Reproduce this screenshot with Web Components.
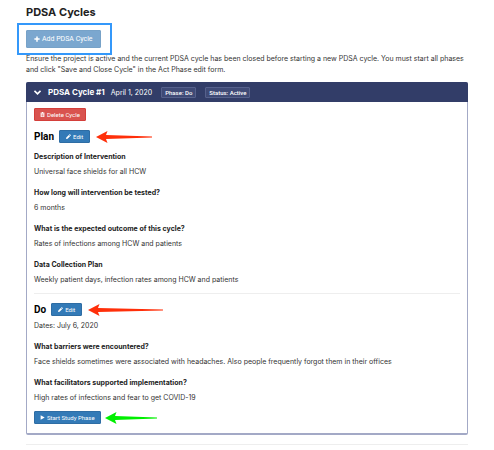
<!DOCTYPE html>
<html lang="en">
<head>
<meta charset="utf-8">
<meta name="viewport" content="width=device-width, initial-scale=1">
<title>PDSA Cycles</title>
<style>
body {
    margin: 0;
    background: #fff;
    color: #333;
    font: 7px/11px Inter, Roboto, sans-serif;
    --heading-font: Inter, "Open Sans", sans-serif;
}
</style>
</head>
<body>
<pdsa-page>
    <pdsa-highlight slot="action"><pdsa-button icon="plus" kind="add">Add PDSA Cycle</pdsa-button></pdsa-highlight>
    <span slot="help">Ensure the project is active and the current PDSA cycle has been closed before starting a new PDSA cycle. You must start all phases and click "Save and Close Cycle" in the Act Phase edit form.</span>
    <pdsa-cycle>
        <span slot="name">PDSA Cycle #1</span>
        <span slot="date">April 1, 2020</span>
        <pdsa-badge slot="badges">Phase: Do</pdsa-badge>
        <pdsa-badge slot="badges">Status: Active</pdsa-badge>
        <pdsa-button icon="trash" kind="danger">Delete Cycle</pdsa-button>
        <pdsa-phase>
            <span slot="name">Plan</span>
            <pdsa-arrow slot="pointer" length="57" color="#ff2f0a"></pdsa-arrow>
            <pdsa-answer><span slot="question">Description of Intervention</span>Universal face shields for all HCW</pdsa-answer>
            <pdsa-answer><span slot="question">How long will intervention be tested?</span>6 months</pdsa-answer>
            <pdsa-answer><span slot="question">What is the expected outcome of this cycle?</span>Rates of infections among HCW and patients</pdsa-answer>
            <pdsa-answer><span slot="question">Data Collection Plan</span>Weekly patient days, infection rates among HCW and patients</pdsa-answer>
        </pdsa-phase>
        <pdsa-phase>
            <span slot="name">Do</span>
            <pdsa-arrow slot="pointer" length="76" color="#ff2f0a"></pdsa-arrow>
            <span slot="dates">Dates: July 6, 2020</span>
            <pdsa-answer><span slot="question">What barriers were encountered?</span>Face shields sometimes were associated with headaches. Also people frequently forgot them in their offices</pdsa-answer>
            <pdsa-answer><span slot="question">What facilitators supported implementation?</span>High rates of infections and fear to get COVID-19</pdsa-answer>
        </pdsa-phase>
        <pdsa-button slot="next" icon="play">Start Study Phase</pdsa-button>
        <pdsa-arrow slot="next" length="53" color="#00ef00"></pdsa-arrow>
    </pdsa-cycle>
</pdsa-page>

<script>
const ICONS = {
    plus: '<path d="M6 1h4v5h5v4h-5v5H6v-5H1V6h5z"/>',
    trash: '<path fill-rule="evenodd" d="M5 2l1-2h4l1 2h4v2H1V2zM2 5h12v10l-1 1H3l-1-1zm2 2v7h1V7zm3 0v7h2V7zm4 0v7h1V7z"/>',
    pencil: '<path d="M12 0l4 4-2 2-4-4zM9 3l4 4-8 8-5 1 1-5z"/>',
    play: '<path d="M2 1l13 7-13 7z"/>',
};

function define(name, html, setup) {
    const template = document.createElement('template');
    template.innerHTML = html;
    customElements.define(name, class extends HTMLElement {
        constructor() {
            super();
            this.attachShadow({ mode: 'open' }).appendChild(template.content.cloneNode(true));
        }

        connectedCallback() {
            if (setup) setup(this, this.shadowRoot);
        }
    });
}

define('pdsa-button', `<style>
    :host { display: inline-flex; vertical-align: top; }
    button {
        display: flex;
        align-items: center;
        justify-content: center;
        gap: 2px;
        margin: 0;
        padding: 1px 5px;
        border: 1px solid #2e6da4;
        border-radius: 1px;
        background: #337ab7;
        color: #fff;
        font: 400 6px/9px Roboto, sans-serif;
        white-space: nowrap;
        cursor: pointer;
    }
    svg { width: 5px; height: 5px; fill: currentColor; }
    :host([kind=danger]) button { background: #d9534f; border-color: #d43f3a; }
    :host([kind=edit]) button { padding: 1px 6px; }
    :host([kind=add]) button { background: #7ba7cf; border-color: #77a2c8; padding: 3px 7px; font-size: 7px; line-height: 10px; }
    :host([kind=add]) svg { width: 6px; height: 6px; }
</style>
<button type="button"><svg viewBox="0 0 16 16" aria-hidden="true"></svg><span><slot></slot></span></button>`,
(host, root) => {
    root.querySelector('svg').innerHTML = ICONS[host.getAttribute('icon')];
});

define('pdsa-badge', `<style>
    :host {
        display: block;
        padding: 0 3px;
        border: 1px solid #56618c;
        border-radius: 1px;
        background: #3f4a76;
        color: #fff;
        font: 500 6px/9px Roboto, sans-serif;
        white-space: nowrap;
    }
</style><slot></slot>`);

define('pdsa-highlight', `<style>
    :host {
        display: inline-flex;
        padding: 5px 9px 5px 7px;
        margin-left: -9px;
        border: 2px solid #3498fa;
    }
</style><slot></slot>`);

// Left-pointing marker; the shaft follows the requested length
define('pdsa-arrow', `<style>
    :host { display: block; }
    svg { display: block; height: 12px; }
</style><svg aria-hidden="true"></svg>`,
(host, root) => {
    const length = Number(host.getAttribute('length'));
    const svg = root.querySelector('svg');
    svg.setAttribute('viewBox', `0 0 ${length} 12`);
    svg.style.width = `${length}px`;
    svg.innerHTML = `<path fill="${host.getAttribute('color')}" d="M0 6L11.5 0L10 4L${length - 1} 5.4V6.6L10 8L11.5 12Z"/>`;
});

define('pdsa-answer', `<style>
    :host { display: block; margin-top: 6px; line-height: 15px; }
    h4 { margin: 0; font: 700 7px/15px var(--heading-font); color: #222; }
    p { margin: 0; }
</style>
<h4><slot name="question"></slot></h4>
<p><slot></slot></p>`);

define('pdsa-phase', `<style>
    :host { display: block; }
    :host(:not(:last-of-type)) { padding-bottom: 6px; border-bottom: 1px solid #eee; }
    header { display: flex; align-items: center; padding-top: 9px; }
    h3 { margin: 0 5px 0 0; font: 700 10px/13px Roboto, sans-serif; color: #000; }
    ::slotted([slot=pointer]) { margin-left: 6px; }
    ::slotted([slot=dates]) { display: block; margin-top: 2px; line-height: 15px; }
</style>
<header>
    <h3><slot name="name"></slot></h3>
    <pdsa-button icon="pencil" kind="edit">Edit</pdsa-button>
    <slot name="pointer"></slot>
</header>
<slot name="dates"></slot>
<slot></slot>`);

define('pdsa-cycle', `<style>
    :host {
        display: block;
        border: 1px solid #a3a9c6;
        border-bottom-width: 2px;
        border-radius: 2px;
    }
    .bar {
        display: flex;
        align-items: center;
        margin: -1px -1px 0;
        padding: 0 8px;
        min-height: 20px;
        border-radius: 2px 2px 0 0;
        background: #323d68;
        color: #fff;
        font: 7px/11px var(--heading-font);
    }
    .toggle { display: flex; margin: 0 7px 0 0; padding: 0; border: 0; background: none; color: inherit; }
    .toggle svg { width: 7px; height: 7px; fill: none; stroke: currentColor; stroke-width: 4; }
    h2 { margin: 0 6px 0 0; font: 700 8px/11px var(--heading-font); }
    .badges { display: flex; gap: 9px; margin-left: 9px; }
    .body { padding: 6px 7px 9px; }
    .next { display: flex; align-items: center; gap: 4px; margin-top: 6px; }
</style>
<div class="bar">
    <button class="toggle" type="button" aria-label="Toggle cycle" aria-expanded="true"><svg viewBox="0 0 16 16"><path d="M1 4l7 7 7-7"/></svg></button>
    <h2><slot name="name"></slot></h2>
    <slot name="date"></slot>
    <div class="badges"><slot name="badges"></slot></div>
</div>
<div class="body">
    <slot></slot>
    <div class="next"><slot name="next"></slot></div>
</div>`);

define('pdsa-page', `<style>
    :host { display: block; padding: 4px 26px; }
    h1 { margin: 0; font: 700 11px/16px var(--heading-font); color: #222; }
    .action { display: flex; margin-top: 3px; }
    .help { margin: -2px 0 7px; }
    hr { margin: 9px 0 0; border: 0; border-top: 1px solid #eee; }
</style>
<h1>PDSA Cycles</h1>
<div class="action"><slot name="action"></slot></div>
<p class="help"><slot name="help"></slot></p>
<slot></slot>
<hr>`);
</script>
</body>
</html>
